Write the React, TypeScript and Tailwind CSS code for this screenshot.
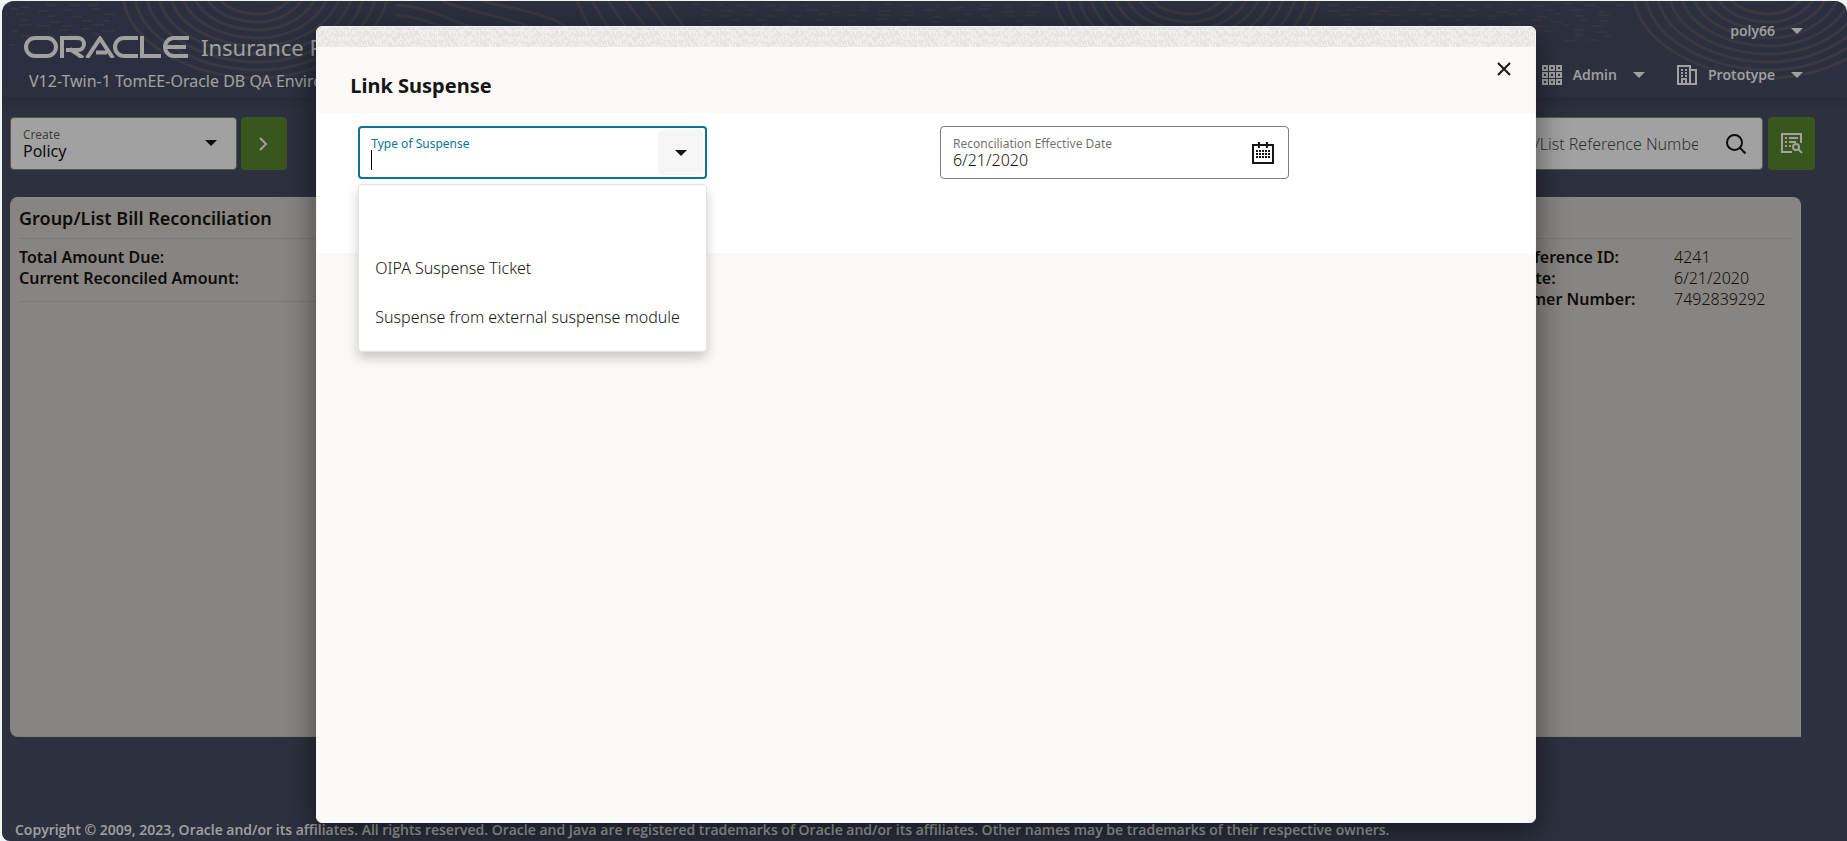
import { useState } from "react";

const suspenseTypes = ["", "OIPA Suspense Ticket", "Suspense from external suspense module"];

const amounts = ["Total Amount Due:", "Current Reconciled Amount:"];

const references = [
  { label: "Bill Reference ID:", value: "4241" },
  { label: "Bill Date:", value: "6/21/2020" },
  { label: "Customer Number:", value: "7492839292" },
];

// small deterministic generator so the textures look the same on every load
function makeRandom(seed: number) {
  let state = seed;
  return () => {
    state = (state * 16807) % 2147483647;
    return state / 2147483647;
  };
}

function buildDashes(from: number, to: number, seed: number) {
  const random = makeRandom(seed);
  const parts: string[] = [];
  for (let y = 3; y < 46; y += 5) {
    for (let x = from + random() * 20; x < to - 12; x += 18 + random() * 14) {
      if (y > 26 && random() < (y - 26) / 26) continue;
      parts.push(`M${x.toFixed(0)} ${(y + random() * 3).toFixed(0)}h${(6 + random() * 7).toFixed(0)}`);
    }
  }
  return parts.join("");
}

function buildGrain() {
  const random = makeRandom(77);
  const parts: string[] = [];
  for (let x = 0; x < 240; x += 2) {
    for (let y = random() * 4; y < 21; y += 5 + random() * 5) {
      parts.push(`M${x} ${y.toFixed(0)}l${random() < 0.5 ? 0 : 1} ${(2 + random() * 4).toFixed(0)}`);
    }
  }
  return parts.join("");
}

const dashes = buildDashes(0, 115, 11) + buildDashes(690, 1045, 23) + buildDashes(1325, 1630, 41);
const grain = buildGrain();
const ringSteps = [0, 1, 2, 3, 4, 5, 6, 7, 8];

function Rings({ x }: { x: number }) {
  return (
    <g strokeWidth="3">
      {ringSteps.map((i) => {
        const w = 36 + i * 12;
        const h = 12 + i * 8;
        return (
          <path
            key={i}
            d={`M${x - w} -2C${x - w + 8} ${h * 0.6} ${x - w * 0.45} ${h} ${x} ${h + 1}S${x + w - 10} ${h * 0.6} ${x + w} -2`}
          />
        );
      })}
    </g>
  );
}

function HeaderTexture() {
  return (
    <svg className="absolute left-0 top-0 h-24 w-full" aria-hidden="true" fill="none" stroke="#5f5b69" opacity="0.9">
      <path d={dashes} strokeWidth="1.5" />
      <Rings x={253} />
      <Rings x={1185} />
      <Rings x={1764} />
      <g strokeWidth="3">
        <path d="M394 4c40 2 60 22 90 24M394 14c30 2 50 16 80 22M440 0c30 12 60 14 100 30M480 0c30 8 70 12 90 30" />
        <path d="M575 0l12 26M590 0l16 26M606 0l18 26M624 0l20 26M644 0l20 26M664 0l18 26" />
      </g>
    </svg>
  );
}

function OracleLogo() {
  return (
    <svg
      width="166"
      height="22"
      viewBox="0 0 166 22"
      className="shrink-0"
      role="img"
      aria-label="Oracle"
      fill="none"
      stroke="#fff"
      strokeWidth="4"
    >
      <rect x="2" y="2" width="30" height="18" rx="9" />
      <path d="M38 22V2h16a5.5 5.5 0 0 1 0 12H42M46 13l13 9" />
      <path d="M63 22L76 2.500L89 22M72 16.500h11" />
      <path d="M114 2h-14a9 9 0 0 0 0 18h14" />
      <path d="M118 0v20h19" />
      <path d="M165 2h-15a9 9 0 0 0 0 18h14M143 11h19" />
    </svg>
  );
}

function Caret({ className }: { className?: string }) {
  return (
    <svg width="12" height="6" viewBox="0 0 12 6" className={className} aria-hidden="true">
      <path d="M0 0h12L6 6z" fill="currentColor" />
    </svg>
  );
}

function GridIcon() {
  return (
    <svg width="20" height="20" viewBox="0 0 20 20" fill="none" stroke="currentColor" strokeWidth="2" aria-hidden="true">
      {[1, 8, 15].map((y) =>
        [1, 8, 15].map((x) => <rect key={`${x}-${y}`} x={x} y={y} width="4" height="4" />)
      )}
    </svg>
  );
}

function BuildingIcon() {
  return (
    <svg width="20" height="20" viewBox="0 0 20 20" fill="none" stroke="currentColor" strokeWidth="2" aria-hidden="true">
      <path d="M0 19h20M1 19V1h12v18M13 5h6v14M5 19v-5h4v5" />
      <path d="M4 5h2M8 5h2M4 8h2M8 8h2M4 11h2M8 11h2" />
    </svg>
  );
}

function SearchIcon() {
  return (
    <svg width="20" height="20" viewBox="0 0 20 20" fill="none" stroke="currentColor" strokeWidth="2" aria-hidden="true">
      <circle cx="8.500" cy="8.500" r="7.500" />
      <path d="M14 14l5.500 5.500" />
    </svg>
  );
}

function ListSearchIcon() {
  return (
    <svg width="22" height="21" viewBox="0 0 22 21" fill="none" stroke="currentColor" strokeWidth="2" aria-hidden="true">
      <path d="M11 19H1V1h19v9" />
      <path d="M4 5h2M8 5h9M4 9h2M8 9h7M4 13h2M8 13h2" />
      <circle cx="15" cy="14" r="3" />
      <path d="M17 16l4 4" />
    </svg>
  );
}

function CalendarIcon() {
  return (
    <svg width="22" height="22" viewBox="0 0 22 22" fill="none" stroke="currentColor" strokeWidth="2" aria-hidden="true">
      <path d="M1 3h20v18H1zM7 0v6M15 0v6" />
      <path d="M4 9h15M4 12h15M4 15h15" strokeDasharray="2 1" />
    </svg>
  );
}

function Header() {
  return (
    <header className="relative flex h-24 shrink-0 justify-between shadow-[0_2px_10px_rgba(0,0,0,0.15)]">
      <HeaderTexture />
      <div className="relative w-80 overflow-hidden whitespace-nowrap pl-[22px] pt-[30px]">
        <div className="flex items-center gap-[11px]">
          <OracleLogo />
          <h1 className="text-[22px] leading-8">Insurance Policy Administration</h1>
        </div>
        <p className="mt-[2px] pl-[5px] text-base leading-8">V12-Twin-1 TomEE-Oracle DB QA Environment</p>
      </div>
      <div className="relative flex flex-col items-end gap-5 pr-11 pt-[18px] font-['Open_Sans','Noto_Sans',sans-serif] text-sm font-semibold">
        <button type="button" className="flex h-6 items-center gap-4">
          poly66
          <Caret />
        </button>
        <nav className="flex h-6 items-center gap-8">
          <button type="button" className="flex items-center gap-4">
            <span className="flex items-center gap-[11px]">
              <GridIcon />
              Admin
            </span>
            <Caret />
          </button>
          <button type="button" className="flex items-center gap-4">
            <span className="flex items-center gap-[11px]">
              <BuildingIcon />
              Prototype
            </span>
            <Caret />
          </button>
        </nav>
      </div>
    </header>
  );
}

function Toolbar() {
  return (
    <div className="flex justify-between pl-2 pr-8 pt-5 text-[#161513]">
      <div className="flex gap-1">
        <div className="relative h-[53px] w-[227px] rounded border border-[#8b8580] bg-white">
          <label htmlFor="create" className="absolute left-3 top-[9px] text-xs leading-4 text-[#161513]/70">
            Create
          </label>
          <select id="create" className="h-full w-full appearance-none px-3 pt-[14px] text-base leading-5 outline-none">
            <option>Policy</option>
          </select>
          <Caret className="pointer-events-none absolute right-[19px] top-[22px]" />
        </div>
        <button type="button" aria-label="Create policy" className="flex h-[53px] w-[46px] items-center justify-center rounded bg-[#5b892d] text-white">
          <svg width="10" height="14" viewBox="0 0 10 14" fill="none" stroke="currentColor" strokeWidth="2" aria-hidden="true">
            <path d="M1 1l6 6-6 6" />
          </svg>
        </button>
      </div>
      <div className="flex gap-[5px]">
        <div className="flex h-[53px] w-[308px] items-center rounded border border-[#8b8580] bg-white pl-8 pr-4">
          <input
            type="text"
            aria-label="Group/List Reference Number"
            placeholder="Group/List Reference Number"
            className="min-w-0 flex-1 text-base font-light outline-none placeholder:text-[#161513]/80"
          />
          <button type="button" aria-label="Search" className="pl-7">
            <SearchIcon />
          </button>
        </div>
        <button type="button" aria-label="Advanced search" className="flex h-[53px] w-[47px] items-center justify-center rounded bg-[#5b892d] text-white">
          <ListSearchIcon />
        </button>
      </div>
    </div>
  );
}

function Reconciliation() {
  return (
    <section className="ml-2 mr-[46px] mt-[27px] h-[540px] rounded-lg rounded-br-none border border-[#dcdcda] border-b-[#cfcac5] border-l-[#cfcac5] bg-[#d7d2cc] px-2 text-[#161513]">
      <h2 className="border-b border-[#c5c0bb] py-[6px] text-lg leading-7 font-semibold">Group/List Bill Reconciliation</h2>
      <div className="flex items-start justify-between pt-2">
        <div className="w-1/3 border-b border-[#c5c0bb] pb-3">
          {amounts.map((amount) => (
            <p key={amount} className="text-base leading-[21px] font-semibold">
              {amount}
            </p>
          ))}
        </div>
        <dl className="grid w-[306px] grid-cols-[188px_1fr] text-base leading-[21px]">
          {references.map((reference) => (
            <div key={reference.label} className="contents">
              <dt className="font-semibold">{reference.label}</dt>
              <dd className="font-light">{reference.value}</dd>
            </div>
          ))}
        </dl>
      </div>
    </section>
  );
}

function SuspenseField() {
  const [value, setValue] = useState("");

  return (
    <div className="relative w-3/5">
      <div className="relative flex h-[53px] rounded border-2 border-[#0d7296] bg-white">
        <label htmlFor="suspense-type" className="absolute left-[11px] top-2 text-xs leading-4 text-[#0d7296]">
          Type of Suspense
        </label>
        <input
          id="suspense-type"
          type="text"
          role="combobox"
          aria-expanded="true"
          aria-controls="suspense-options"
          value={value}
          onChange={(event) => setValue(event.target.value)}
          className="min-w-0 flex-1 px-[11px] pt-4 text-base font-light caret-transparent outline-none"
        />
        {value === "" && <span className="absolute left-[11px] top-[22px] h-5 w-px bg-black" />}
        <button type="button" aria-label="Show options" className="m-[2px] flex w-[45px] items-center justify-center rounded bg-[#f5f5f5]">
          <Caret />
        </button>
      </div>
      <ul
        id="suspense-options"
        role="listbox"
        className="absolute inset-x-0 top-[58px] rounded border border-[#e4e3e2] bg-white pt-[9px] pb-[10px] text-base font-light shadow-[0_6px_12px_rgba(0,0,0,0.2)]"
      >
        {suspenseTypes.map((type) => (
          <li
            key={type}
            role="option"
            aria-selected={type === value}
            onClick={() => setValue(type)}
            className="flex h-[49px] cursor-pointer items-center whitespace-nowrap px-4"
          >
            {type}
          </li>
        ))}
      </ul>
    </div>
  );
}

function DateField() {
  return (
    <div className="relative flex h-[53px] w-3/5 items-center rounded border border-[#7f7d7b] bg-white pr-[14px]">
      <label htmlFor="effective-date" className="absolute left-3 top-[9px] text-xs leading-4 text-[#161513]/65">
        Reconciliation Effective Date
      </label>
      <input
        id="effective-date"
        type="text"
        defaultValue="6/21/2020"
        className="h-full min-w-0 flex-1 px-3 pt-[14px] text-base font-light outline-none"
      />
      <button type="button" aria-label="Choose date">
        <CalendarIcon />
      </button>
    </div>
  );
}

function LinkSuspenseDialog() {
  return (
    <div className="absolute inset-0 flex justify-center bg-black/37 pb-[18px] pl-[3px] pt-[25px]">
      <div
        role="dialog"
        aria-labelledby="dialog-title"
        className="flex w-[66.2%] flex-col overflow-hidden rounded-md border border-[#f5f5f4] bg-[#faf9f8] text-[#161513] shadow-[0_8px_32px_rgba(0,0,0,0.5)]"
      >
        <svg className="h-5 w-full shrink-0 bg-[#e6e5e3]" aria-hidden="true">
          <defs>
            <pattern id="grain" width="240" height="21" patternUnits="userSpaceOnUse">
              <path d={grain} stroke="#f7f6f5" strokeWidth="1" fill="none" />
            </pattern>
          </defs>
          <rect width="100%" height="21" fill="url(#grain)" />
        </svg>
        <div className="flex h-[66px] shrink-0 items-start justify-between pl-[33px] pr-[23px]">
          <h2 id="dialog-title" className="pt-[25px] text-xl leading-7 font-bold">
            Link Suspense
          </h2>
          <button type="button" aria-label="Close" className="p-[1px] pt-[15px]">
            <svg width="14" height="14" viewBox="0 0 14 14" fill="none" stroke="currentColor" strokeWidth="2" aria-hidden="true">
              <path d="M1 1l12 12M13 1L1 13" />
            </svg>
          </button>
        </div>
        <div className="grid h-[140px] shrink-0 grid-cols-2 bg-white pl-[41px] pr-[13px] pt-[13px]">
          <SuspenseField />
          <DateField />
        </div>
      </div>
    </div>
  );
}

export default function App() {
  return (
    <div className="h-screen overflow-hidden bg-[#f1f5f4] pl-[2px] pt-px font-['Noto_Sans','Open_Sans',sans-serif]">
      <div className="relative flex h-full flex-col overflow-hidden rounded-t-xl rounded-bl-lg bg-[#484c64] text-white">
        <Header />
        <main>
          <Toolbar />
          <Reconciliation />
        </main>
        <footer className="mt-auto px-[13px] pb-px font-['Open_Sans','Noto_Sans',sans-serif] text-sm leading-5 font-semibold whitespace-nowrap">
          Copyright © 2009, 2023, Oracle and/or its affiliates. All rights reserved. Oracle and Java are registered trademarks of Oracle and/or its affiliates. Other names may be trademarks of their respective owners.
        </footer>
        <LinkSuspenseDialog />
      </div>
    </div>
  );
}
